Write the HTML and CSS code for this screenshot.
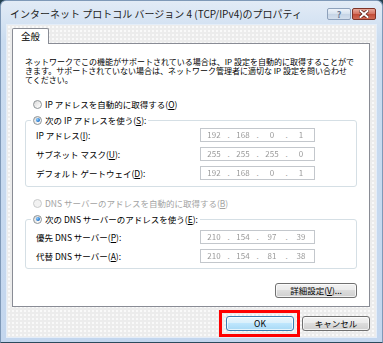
FILE: index.html
```html
<!DOCTYPE html>
<html>
<head>
  <meta charset="utf-8">
  <title>インターネット プロトコル バージョン 4 (TCP/IPv4)のプロパティ</title>
  <link rel="stylesheet" href="styles.css">
</head>
<body>
  <div class="window">
    <div class="titlebar">
      <span class="title">インターネット プロトコル バージョン 4 (TCP/IPv4)のプロパティ</span>
      <div class="caption-buttons">
        <span class="caption-btn help">?</span>
        <span class="caption-btn close">
          <svg width="10" height="8" viewBox="0 0 10 8">
            <path d="M1.5 1 L8.5 7 M8.5 1 L1.5 7" stroke="#5a1b12" stroke-width="3.4" stroke-linecap="square"/>
            <path d="M1.5 1 L8.5 7 M8.5 1 L1.5 7" stroke="#fff" stroke-width="2" stroke-linecap="square"/>
          </svg>
        </span>
      </div>
    </div>

    <div class="client">
      <div class="tabs">
        <span class="tab">全般</span>
      </div>

      <div class="tab-panel">
        <p class="desc">ネットワークでこの機能がサポートされている場合は、IP 設定を自動的に取得することがで<br>きます。サポートされていない場合は、ネットワーク管理者に適切な IP 設定を問い合わせ<br>てください。</p>

        <div class="radio-row">
          <span class="radio"></span>
          <span>IP アドレスを自動的に取得する(<u>O</u>)</span>
        </div>

        <fieldset class="group">
          <legend><span class="radio checked"></span><span>次の IP アドレスを使う(<u>S</u>):</span></legend>
          <div class="field-row">
            <span>IP アドレス(<u>I</u>):</span>
            <div class="ip"><span class="oct">192</span><span class="dot">.</span><span class="oct">168</span><span class="dot">.</span><span class="oct">0</span><span class="dot">.</span><span class="oct">1</span></div>
          </div>
          <div class="field-row">
            <span>サブネット マスク(<u>U</u>):</span>
            <div class="ip"><span class="oct">255</span><span class="dot">.</span><span class="oct">255</span><span class="dot">.</span><span class="oct">255</span><span class="dot">.</span><span class="oct">0</span></div>
          </div>
          <div class="field-row">
            <span>デフォルト ゲートウェイ(<u>D</u>):</span>
            <div class="ip"><span class="oct">192</span><span class="dot">.</span><span class="oct">168</span><span class="dot">.</span><span class="oct">0</span><span class="dot">.</span><span class="oct">1</span></div>
          </div>
        </fieldset>

        <div class="radio-row dns-auto disabled">
          <span class="radio"></span>
          <span>DNS サーバーのアドレスを自動的に取得する(<u>B</u>)</span>
        </div>

        <fieldset class="group dns">
          <legend><span class="radio checked"></span><span>次の DNS サーバーのアドレスを使う(<u>E</u>):</span></legend>
          <div class="field-row">
            <span>優先 DNS サーバー(<u>P</u>):</span>
            <div class="ip"><span class="oct">210</span><span class="dot">.</span><span class="oct">154</span><span class="dot">.</span><span class="oct">97</span><span class="dot">.</span><span class="oct">39</span></div>
          </div>
          <div class="field-row">
            <span>代替 DNS サーバー(<u>A</u>):</span>
            <div class="ip"><span class="oct">210</span><span class="dot">.</span><span class="oct">154</span><span class="dot">.</span><span class="oct">81</span><span class="dot">.</span><span class="oct">38</span></div>
          </div>
        </fieldset>

        <div class="advanced-row">
          <button class="btn advanced">詳細設定(<u>V</u>)...</button>
        </div>
      </div>

      <div class="footer">
        <div class="focus-mark">
          <button class="btn default">OK</button>
        </div>
        <button class="btn">キャンセル</button>
      </div>
    </div>
  </div>
</body>
</html>
```

FILE: styles.css
```css
/* Vista style dialog */
* {
  box-sizing: border-box;
}

body {
  margin: 0;
  font-family: "Noto Sans CJK JP", "Noto Sans", sans-serif;
  font-size: 8.5px;
  color: #000;
  background: #24404f;
}

.window {
  width: 383px;
  height: 343px;
  display: flex;
  flex-direction: column;
  border: 1px solid #7f99b8;
  border-bottom-color: #2c4a5c;
  border-radius: 6px 6px 0 0;
  background: linear-gradient(#e2ebf6, #cadcf0 40px, #c3d6ee);
}

.titlebar {
  height: 24px;
  display: flex;
  align-items: center;
  justify-content: space-between;
  padding: 0 6px 0 9px;
}

.title {
  font-size: 10px;
  color: #1c1c1c;
  white-space: nowrap;
}

.caption-buttons {
  display: flex;
  gap: 1px;
  margin-top: 2px;
}

.caption-btn {
  width: 24px;
  height: 12px;
  display: flex;
  align-items: center;
  justify-content: center;
  border: 1px solid #8ea1bb;
  border-radius: 2px;
}

.help {
  background: linear-gradient(#eef3fa, #d5e1ee 50%, #c5d4e6 50%, #d3dfed);
  color: #6b7d96;
  font-size: 9px;
  font-weight: bold;
  line-height: 1;
}

.close {
  border-color: #7d3226;
  background: linear-gradient(#e8a99b, #d4705e 50%, #c04a35 50%, #d06a55);
}

.client {
  flex: 1;
  display: flex;
  flex-direction: column;
  margin: 0 6px 5px;
  padding: 3px 6px 6px 5px;
  background-color: #ececec;
  background-image: radial-gradient(#fafafa 0.7px, transparent 0.9px);
  background-size: 4px 4px;
  box-shadow: 0 0 0 1px #e4edf8;
}

.tabs {
  display: flex;
}

.tab {
  position: relative;
  z-index: 1;
  width: 37px;
  height: 16px;
  margin-bottom: -1px;
  border: 1px solid #898c95;
  border-bottom: none;
  border-radius: 2px 2px 0 0;
  background: #fff;
  font-size: 9.5px;
  line-height: 15px;
  text-align: center;
}

.tab-panel {
  border: 1px solid #898c95;
  background: #fff;
  padding: 13px 12px 8px 12px;
}

.desc {
  margin: 0;
  font-size: 8px;
  line-height: 9px;
  white-space: nowrap;
}

.radio-row {
  display: flex;
  align-items: center;
  gap: 3px;
  height: 10px;
  margin-top: 15px;
  padding-left: 8px;
  white-space: nowrap;
}

.radio-row.dns-auto {
  margin-top: 11px;
}

.disabled {
  color: #a3a3a3;
}

.radio {
  position: relative;
  width: 9px;
  height: 9px;
  flex: none;
  border: 1px solid #8e9497;
  border-radius: 50%;
  background: linear-gradient(135deg, #d8d8d8, #f6f6f6 70%, #fff);
}

.disabled .radio {
  border-color: #c9cbcc;
  background: #f2f2f2;
}

.radio.checked::after {
  content: "";
  position: absolute;
  inset: 1.5px;
  border-radius: 50%;
  background: radial-gradient(circle at 35% 35%, #8fd0ff, #1e6fc8 70%);
}

.group {
  margin: 6px 0 0;
  padding: 3px 0 6px 10px;
  border: 1px solid #d5dfe5;
  border-radius: 3px;
  min-width: 0;
}

.group.dns {
  padding-top: 6px;
  padding-bottom: 5px;
}

.group legend {
  display: flex;
  align-items: center;
  gap: 3px;
  height: 10px;
  margin-left: -5px;
  padding: 0 2px;
  white-space: nowrap;
}

.field-row {
  display: grid;
  grid-template-columns: 164px 115px;
  align-items: center;
  height: 14px;
  margin-top: 5px;
  white-space: nowrap;
}

.field-row:first-of-type {
  margin-top: 0;
}

.ip {
  display: flex;
  height: 14px;
  border: 1px solid #c3c7cc;
  background: #fff;
  color: #9a9a9a;
  font-size: 8px;
  line-height: 12px;
}

.oct {
  flex: 1;
  text-align: center;
  filter: blur(0.7px);
}

.dot {
  width: 3px;
  text-align: center;
}

.advanced-row {
  display: flex;
  justify-content: flex-end;
  margin-top: 14px;
}

.btn {
  height: 15px;
  padding: 0;
  border: 1px solid #707070;
  border-radius: 3px;
  background: linear-gradient(#f2f2f2, #ebebeb 45%, #dddddd 50%, #cfcfcf);
  box-shadow: inset 0 0 0 1px rgba(255, 255, 255, 0.7);
  font-family: inherit;
  font-size: 8.5px;
  line-height: 13px;
  color: #000;
  width: 68px;
}

.btn.advanced {
  width: 82px;
}

.btn.default {
  border-color: #3c7fb1;
  background: linear-gradient(#eaf6fd, #d9f0fc 45%, #bee6fd 50%, #a7d9f5);
}

.footer {
  display: flex;
  justify-content: flex-end;
  gap: 8px;
  margin-top: 9px;
}

.focus-mark {
  position: relative;
  display: flex;
}

.focus-mark::after {
  content: "";
  position: absolute;
  inset: -6px -6px -6px -7px;
  border: 3px solid #ff0000;
}
```
